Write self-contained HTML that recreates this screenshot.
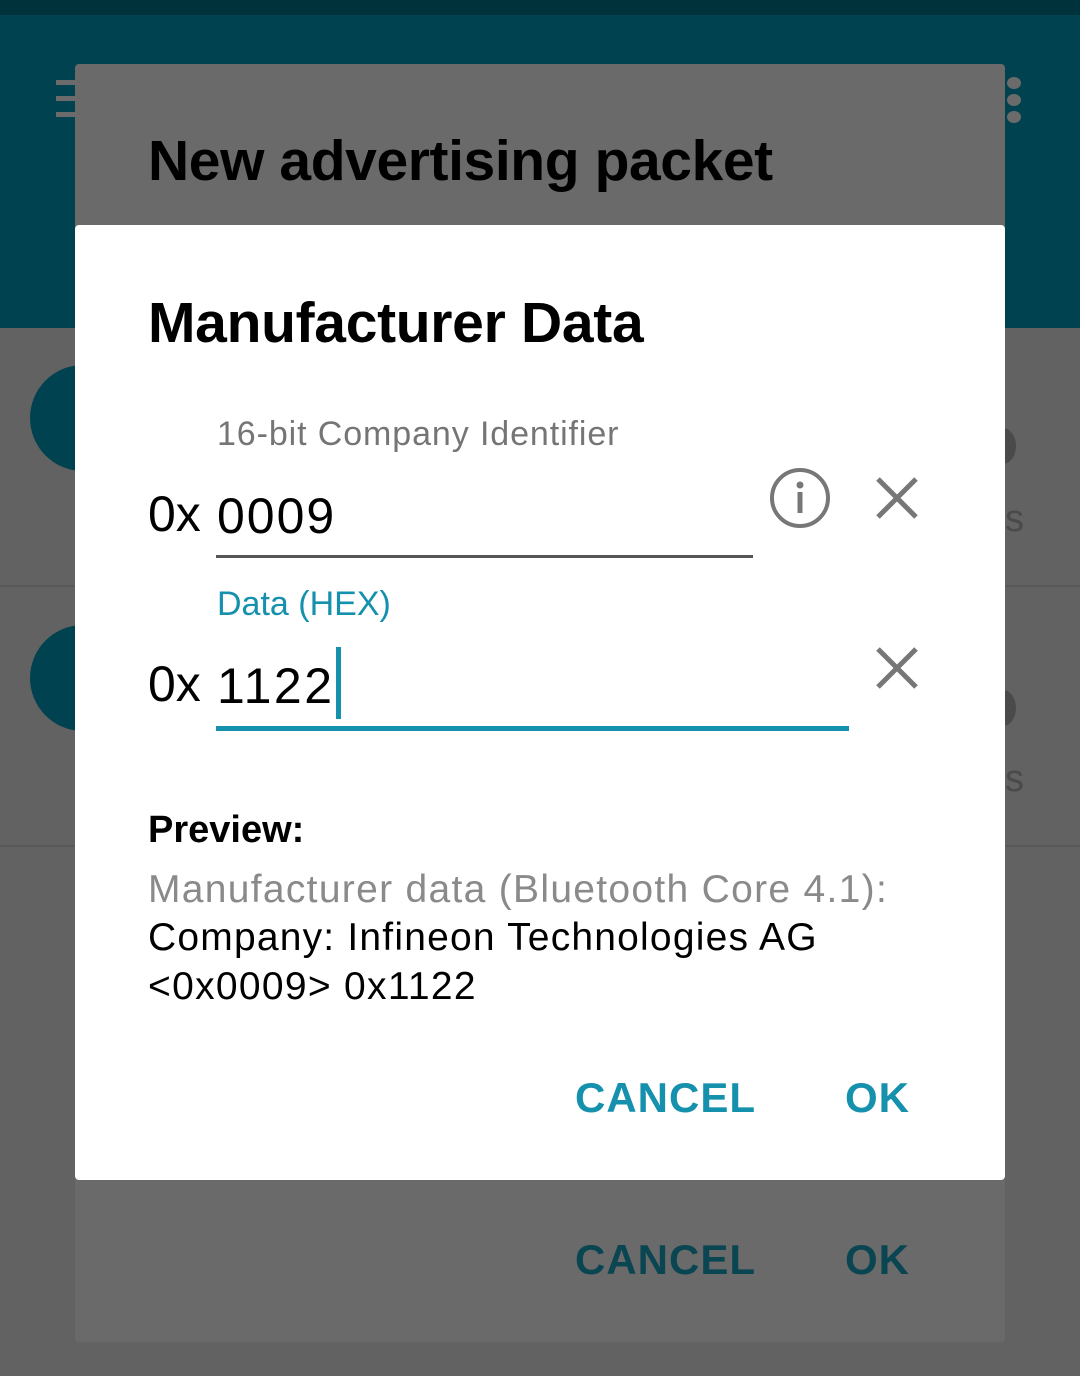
<!DOCTYPE html>
<html><head><style>
body{margin:0;width:1080px;height:1376px;position:relative;overflow:hidden;background:#626262;font-family:"Liberation Sans",sans-serif}
.a{position:absolute;white-space:nowrap}
</style></head><body>
<div class="a" style="left:0;top:0;width:1080px;height:15px;background:#00323c"></div>
<div class="a" style="left:0;top:15px;width:1080px;height:313px;background:#00424f"></div>
<div class="a" style="left:56px;top:80px;width:20px;height:5px;background:#6b6b6b"></div>
<div class="a" style="left:56px;top:96px;width:20px;height:5px;background:#6b6b6b"></div>
<div class="a" style="left:56px;top:112px;width:20px;height:5px;background:#6b6b6b"></div>
<div class="a" style="left:1007px;top:77px;width:14px;height:12px;border-radius:50%;background:#6b6b6b"></div>
<div class="a" style="left:1007px;top:94px;width:14px;height:12px;border-radius:50%;background:#6b6b6b"></div>
<div class="a" style="left:1007px;top:111px;width:14px;height:12px;border-radius:50%;background:#6b6b6b"></div>
<div class="a" style="left:30px;top:365px;width:106px;height:106px;border-radius:50%;background:#00424f"></div>
<div class="a" style="left:30px;top:625px;width:106px;height:106px;border-radius:50%;background:#00424f"></div>
<div class="a" style="left:0;top:585px;width:1080px;height:2px;background:#595959"></div>
<div class="a" style="left:0;top:845px;width:1080px;height:2px;background:#595959"></div>
<div class="a" style="left:990px;top:428px;width:26px;height:36px;border-radius:50%;background:#4a4a4a"></div>
<div class="a" style="left:990px;top:690px;width:26px;height:36px;border-radius:50%;background:#4a4a4a"></div>
<div class="a" style="left:1005px;top:498px;font-size:38px;color:#4a4a4a">s</div>
<div class="a" style="left:1005px;top:758px;font-size:38px;color:#4a4a4a">s</div>
<div class="a" style="left:75px;top:64px;width:930px;height:1278px;background:#6a6a6a;border-radius:4px"></div>
<div class="a" style="left:148px;top:128px;font-size:57px;font-weight:bold;color:#000;letter-spacing:-0.4px">New advertising packet</div>
<div class="a" style="left:575px;top:1236px;font-size:42px;font-weight:bold;letter-spacing:1px;color:#0a4552">CANCEL</div>
<div class="a" style="left:845px;top:1236px;font-size:42px;font-weight:bold;letter-spacing:1px;color:#0a4552">OK</div>
<div class="a" style="left:75px;top:225px;width:930px;height:955px;background:#fff;border-radius:4px"></div>
<div class="a" style="left:148px;top:290px;font-size:57px;font-weight:bold;color:#000;letter-spacing:-0.3px">Manufacturer Data</div>
<div class="a" style="left:217px;top:415px;font-size:34px;color:#757575;letter-spacing:0.9px">16-bit Company Identifier</div>
<div class="a" style="left:148px;top:485px;font-size:50px;color:#000">0x</div>
<div class="a" style="left:217px;top:487px;font-size:50px;color:#000;letter-spacing:2px">0009</div>
<div class="a" style="left:216px;top:555px;width:537px;height:3px;background:#555"></div>
<svg class="a" style="left:768px;top:466px" width="64" height="64"><circle cx="32" cy="32" r="28" fill="none" stroke="#777" stroke-width="4"/><circle cx="32" cy="19" r="3.5" fill="#777"/><rect x="29.5" y="26" width="5" height="21" fill="#777"/></svg>
<svg class="a" style="left:874px;top:475px" width="46" height="46"><path d="M4 4L42 42M42 4L4 42" stroke="#777" stroke-width="5"/></svg>
<div class="a" style="left:217px;top:585px;font-size:34px;color:#1590ad">Data (HEX)</div>
<div class="a" style="left:148px;top:655px;font-size:50px;color:#000">0x</div>
<div class="a" style="left:217px;top:657px;font-size:50px;color:#000;letter-spacing:2.5px">1122</div>
<div class="a" style="left:336px;top:647px;width:5px;height:72px;background:#1590ad"></div>
<div class="a" style="left:216px;top:726px;width:633px;height:5px;background:#1590ad"></div>
<svg class="a" style="left:874px;top:645px" width="46" height="46"><path d="M4 4L42 42M42 4L4 42" stroke="#777" stroke-width="5"/></svg>
<div class="a" style="left:148px;top:809px;font-size:38px;font-weight:bold;color:#000">Preview:</div>
<div class="a" style="left:148px;top:865px;font-size:39px;color:#8a8a8a;line-height:49px;letter-spacing:1.3px">Manufacturer data (Bluetooth Core 4.1):</div>
<div class="a" style="left:148px;top:913px;font-size:39px;color:#000;line-height:49px;letter-spacing:1.2px">Company: Infineon Technologies AG</div>
<div class="a" style="left:148px;top:962px;font-size:39px;color:#000;line-height:49px;letter-spacing:1.3px">&lt;0x0009&gt; 0x1122</div>
<div class="a" style="left:575px;top:1074px;font-size:42px;font-weight:bold;letter-spacing:1px;color:#1590ad">CANCEL</div>
<div class="a" style="left:845px;top:1074px;font-size:42px;font-weight:bold;letter-spacing:1px;color:#1590ad">OK</div>
</body></html>
